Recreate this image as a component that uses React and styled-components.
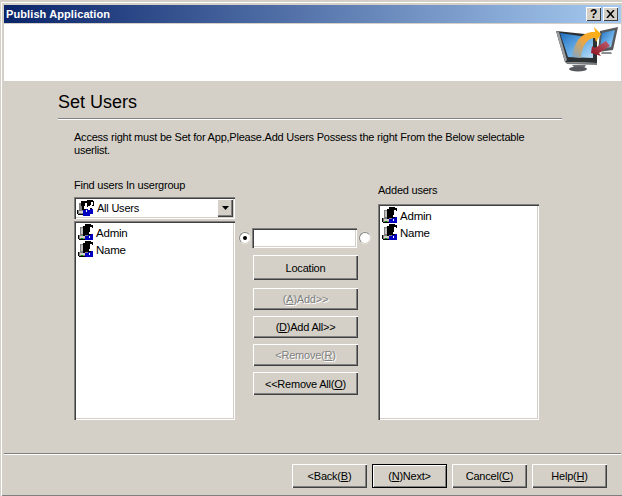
import React from "react";
import styled, { createGlobalStyle } from "styled-components";

const GlobalStyle = createGlobalStyle`
  html, body { margin: 0; padding: 0; background: #d4d0c8; }
  body { font-family: "Liberation Sans", Arial, sans-serif; font-size: 11px; letter-spacing: -0.22px; color: #000; }
`;

const Win = styled.div`
  width: 622px;
  height: 496px;
  box-sizing: border-box;
  padding: 5px 1px 2px 4px;
  background: #d4d0c8;
  box-shadow: inset 1px 2px 0 #d4d0c8, inset 2px 3px 0 #fff, inset 0 -1px 0 #808080;
  display: flex;
  flex-direction: column;
`;

const TitleBar = styled.div`
  height: 18px;
  flex: none;
  padding: 0 3px 0 2px;
  display: flex;
  align-items: center;
  justify-content: space-between;
  background: linear-gradient(90deg, #0a246a 0%, #a6caf0 100%);
`;

const TitleText = styled.span`
  color: #fff;
  font-weight: bold;
  font-size: 11px;
  letter-spacing: 0.1px;
`;

const TitleButtons = styled.div`
  display: flex;
  gap: 2px;
`;

const TitleButton = styled.div`
  width: 15px;
  height: 14px;
  box-sizing: border-box;
  background: #d4d0c8;
  box-shadow: inset 1px 1px 0 #fff, inset -1px -1px 0 #404040;
  display: flex;
  align-items: center;
  justify-content: center;
  font-weight: bold;
  font-size: 12px;
`;

const Header = styled.div`
  height: 57px;
  margin-top: 1px;
  flex: none;
  background: #fff;
  display: flex;
  justify-content: flex-end;
  align-items: flex-start;
`;

const Body = styled.div`
  flex: 1;
  padding: 0 0 0 54px;
  display: flex;
  flex-direction: column;
`;

const Heading = styled.h1`
  margin: 11px 0 0;
  font-size: 18px;
  line-height: 21px;
  font-weight: normal;
  letter-spacing: 0;
`;

const Rule = styled.div`
  width: 504px;
  height: 2px;
  margin-top: 5px;
  border-top: 1px solid #808080;
  border-bottom: 1px solid #fff;
  box-sizing: border-box;
`;

const Intro = styled.p`
  width: 456px;
  margin: 11px 0 0 16px;
  font-size: 11px;
  line-height: 13px;
`;

const Columns = styled.div`
  display: flex;
  margin: 22px 0 0 16px;
  align-items: flex-start;
`;

const Column = styled.div`
  width: 161px;
  display: flex;
  flex-direction: column;
`;

const Label = styled.div`
  height: 13px;
  line-height: 13px;
  margin-top: ${(p) => p.$top || 0}px;
  margin-bottom: ${(p) => p.$bottom || 0}px;
`;

const sunken = `
  box-sizing: border-box;
  background: #fff;
  box-shadow: inset 1px 1px 0 #808080, inset 2px 2px 0 #404040, inset -1px -1px 0 #fff, inset -2px -2px 0 #d4d0c8;
`;

const Combo = styled.div`
  ${sunken}
  height: 22px;
  padding: 2px 2px 2px 3px;
  display: flex;
  align-items: center;
  gap: 2px;
`;

const ComboText = styled.span`
  flex: 1;
`;

const ComboArrow = styled.div`
  width: 16px;
  height: 18px;
  background: #d4d0c8;
  box-shadow: inset 1px 1px 0 #fff, inset -1px -1px 0 #404040, inset -2px -2px 0 #808080;
  display: flex;
  align-items: center;
  justify-content: center;
`;

const List = styled.div`
  ${sunken}
  height: ${(p) => p.$height}px;
  margin-top: ${(p) => p.$top || 0}px;
  padding: 3px 4px;
`;

const ListRow = styled.div`
  height: 17px;
  display: flex;
  align-items: center;
  gap: 1px;
  font-size: 11.5px;
`;

const Middle = styled.div`
  width: 143px;
  display: flex;
  flex-direction: column;
  align-items: flex-start;
  padding: 49px 0 0 4px;
  box-sizing: border-box;
`;

const SearchRow = styled.div`
  display: flex;
  align-items: center;
  gap: 1px;
  height: 20px;
`;

const Radio = styled.div`
  width: 12px;
  height: 12px;
  box-sizing: border-box;
  border-radius: 50%;
  background: #fff;
  border: 1px solid #808080;
  border-right-color: #d4d0c8;
  border-bottom-color: #d4d0c8;
  box-shadow: 0 0 0 0.5px #e8e6e0;
  display: flex;
  align-items: center;
  justify-content: center;
  &::after {
    content: "";
    width: 4px;
    height: 4px;
    border-radius: 50%;
    background: ${(p) => (p.$on ? "#000" : "transparent")};
  }
`;

const SearchInput = styled.div`
  ${sunken}
  width: 105px;
  height: 20px;
  margin-right: 1px;
`;

const Actions = styled.div`
  display: flex;
  flex-direction: column;
  margin-left: 14px;
`;

const raised = `
  box-sizing: border-box;
  background: #d4d0c8;
  display: flex;
  align-items: center;
  justify-content: center;
  box-shadow: inset 1px 1px 0 #fff, inset -1px -1px 0 #404040, inset -2px -2px 0 #808080;
`;

const ActionButton = styled.div`
  ${raised}
  width: 105px;
  height: ${(p) => p.$height || 22}px;
  margin-top: ${(p) => p.$top}px;
  font-size: 11px;
  color: ${(p) => (p.$off ? "#808080" : "#000")};
  text-shadow: ${(p) => (p.$off ? "1px 1px 0 #fff" : "none")};
  u { text-underline-offset: 1px; }
`;

const Footer = styled.div`
  flex: none;
  height: 41px;
  border-top: 1px solid #808080;
  box-shadow: inset 0 1px 0 #fff;
  display: flex;
  justify-content: flex-end;
  gap: 5px;
  padding: 10px 14px 0 0;
  box-sizing: border-box;
`;

const FooterButton = styled.div`
  ${raised}
  width: 75px;
  height: 24px;
  ${(p) =>
    p.$primary &&
    "border: 1px solid #000; box-shadow: inset 1px 1px 0 #fff, inset -1px -1px 0 #808080;"}
`;

const UserIcon = () => (
  <svg width="17" height="17" viewBox="0 0 17 17" shapeRendering="crispEdges">
    <path fill="#808080" d="M2 3h4v8H2z" />
    <path fill="#c0c0c0" d="M3 4h2v6H3z" />
    <path fill="#808080" d="M1 11h9v4H1z" />
    <path fill="#d4d0c8" d="M2 12h7v2H2z" />
    <path fill="#000" d="M1 15h10v1H1zM0 11h1v4H0z" />
    <path fill="#000" d="M7 0h6v1h2v3h-1v4h-1v3H7v1H5V2h2z" />
    <path fill="#fff" d="M12 3h2v5h-1v2h-2V8h1z" />
    <path fill="#0000c0" d="M7 12h3v-1h3v-1h2v6H7z" />
    <path fill="#fff" d="M11 12h1v2h-1z" />
    <path fill="#00a000" d="M3 14h2v1H3z" />
  </svg>
);

const GroupIcon = () => (
  <svg width="18" height="18" viewBox="0 0 18 18" shapeRendering="crispEdges">
    <path fill="#808080" d="M1 11h10v4H1z" />
    <path fill="#d4d0c8" d="M2 12h9v2H2z" />
    <path fill="#000" d="M1 15h10v1H1zM0 11h1v4H0z" />
    <path fill="#808080" d="M2 4h4v7H2z" />
    <path fill="#000" d="M4 2h6v1h1v5H9v3H5V7H4z" />
    <path fill="#fff" d="M8 4h2v4H9v2H7V7h1z" />
    <path fill="#000" d="M10 1h6v1h1v5h-2v3h-2V7h-3z" />
    <path fill="#fff" d="M14 3h2v3h-1v3h-2V6h1z" />
    <path fill="#0000c0" d="M6 11h3v-1h2v1h2v-1h3v5h-3v2H6z" />
    <path fill="#fff" d="M9 11h1v2H9z" />
  </svg>
);

const LogoBox = styled.svg`
  margin-top: 2px;
  flex: none;
`;

const Logo = () => (
  <LogoBox width="66" height="50" viewBox="0 0 66 50">
    <defs>
      <linearGradient id="scr" x1="0" y1="0" x2="1" y2="1">
        <stop offset="0" stopColor="#1e6fc0" />
        <stop offset="0.6" stopColor="#6fb3ea" />
        <stop offset="1" stopColor="#bcdcf5" />
      </linearGradient>
      <linearGradient id="arc" x1="0" y1="1" x2="1" y2="0">
        <stop offset="0" stopColor="#7aa6cf" />
        <stop offset="0.5" stopColor="#f3a63a" />
        <stop offset="1" stopColor="#ffb400" />
      </linearGradient>
      <linearGradient id="back" x1="1" y1="0" x2="0" y2="1">
        <stop offset="0" stopColor="#c06070" />
        <stop offset="1" stopColor="#8c0f1c" />
      </linearGradient>
    </defs>
    <path fill="#55585c" d="M45 5 63 1 58 24 43 26z" />
    <path fill="url(#scr)" d="M47 7 60 4 56 21 45 23z" />
    <path fill="#8a8d90" d="M47 26h9l1 2H46z" />
    <path fill="#2e3134" d="M1 5 30 8 42 12 42 37 10 36z" />
    <path fill="#9a9c9f" d="M1 5 4 6 12 34 10 36z" />
    <path fill="#777a7d" d="M10 36 42 37 42 39 12 38z" />
    <path fill="url(#scr)" d="M5 7 38 12 38 32 13 31z" />
    <path fill="#6b6e70" d="M17 39h14l-2 3h-9z" />
    <ellipse cx="23" cy="43" rx="9" ry="2.500" fill="#55585c" />
    <path fill="url(#arc)" d="M17 31C19 15 28 5 40 6L39 1 46 8 41 16 40 12C32 12 27 20 26 32z" />
    <path fill="url(#back)" d="M51 15 55 20 44 27 46 30 36 27 37 20 40 22z" />
  </LogoBox>
);

const users = ["Admin", "Name"];

export default function App() {
  return (
    <Win>
      <GlobalStyle />
      <TitleBar>
        <TitleText>Publish Application</TitleText>
        <TitleButtons>
          <TitleButton>?</TitleButton>
          <TitleButton>
            <svg width="9" height="8" viewBox="0 0 9 8">
              <path d="M1 0l7 8M8 0l-7 8" stroke="#000" strokeWidth="1.5" fill="none" />
            </svg>
          </TitleButton>
        </TitleButtons>
      </TitleBar>
      <Header>
        <Logo />
      </Header>
      <Body>
        <Heading>Set Users</Heading>
        <Rule />
        <Intro>
          Access right must be Set for App,Please.Add Users Possess the right From the Below selectable userlist.
        </Intro>
        <Columns>
          <Column>
            <Label $bottom={5}>Find users In usergroup</Label>
            <Combo>
              <GroupIcon />
              <ComboText>All Users</ComboText>
              <ComboArrow>
                <svg width="7" height="4" viewBox="0 0 7 4">
                  <path d="M0 0h7L3.500 4z" fill="#000" />
                </svg>
              </ComboArrow>
            </Combo>
            <List $height={199} $top={2}>
              {users.map((u) => (
                <ListRow key={u}>
                  <UserIcon />
                  {u}
                </ListRow>
              ))}
            </List>
          </Column>
          <Middle>
            <SearchRow>
              <Radio $on />
              <SearchInput />
              <Radio />
            </SearchRow>
            <Actions>
              <ActionButton $height={25} $top={7}>Location</ActionButton>
              <ActionButton $top={8} $off><span>(<u>A</u>)Add&gt;&gt;</span></ActionButton>
              <ActionButton $top={6}><span>(<u>D</u>)Add All&gt;&gt;</span></ActionButton>
              <ActionButton $top={6} $off><span>&lt;Remove(<u>R</u>)</span></ActionButton>
              <ActionButton $top={6} $height={23}><span>&lt;&lt;Remove All(<u>O</u>)</span></ActionButton>
            </Actions>
          </Middle>
          <Column>
            <Label $top={5}>Added users</Label>
            <List $height={216} $top={7}>
              {users.map((u) => (
                <ListRow key={u}>
                  <UserIcon />
                  {u}
                </ListRow>
              ))}
            </List>
          </Column>
        </Columns>
      </Body>
      <Footer>
        <FooterButton><span>&lt;Back(<u>B</u>)</span></FooterButton>
        <FooterButton $primary><span>(<u>N</u>)Next&gt;</span></FooterButton>
        <FooterButton><span>Cancel(<u>C</u>)</span></FooterButton>
        <FooterButton><span>Help(<u>H</u>)</span></FooterButton>
      </Footer>
    </Win>
  );
}
